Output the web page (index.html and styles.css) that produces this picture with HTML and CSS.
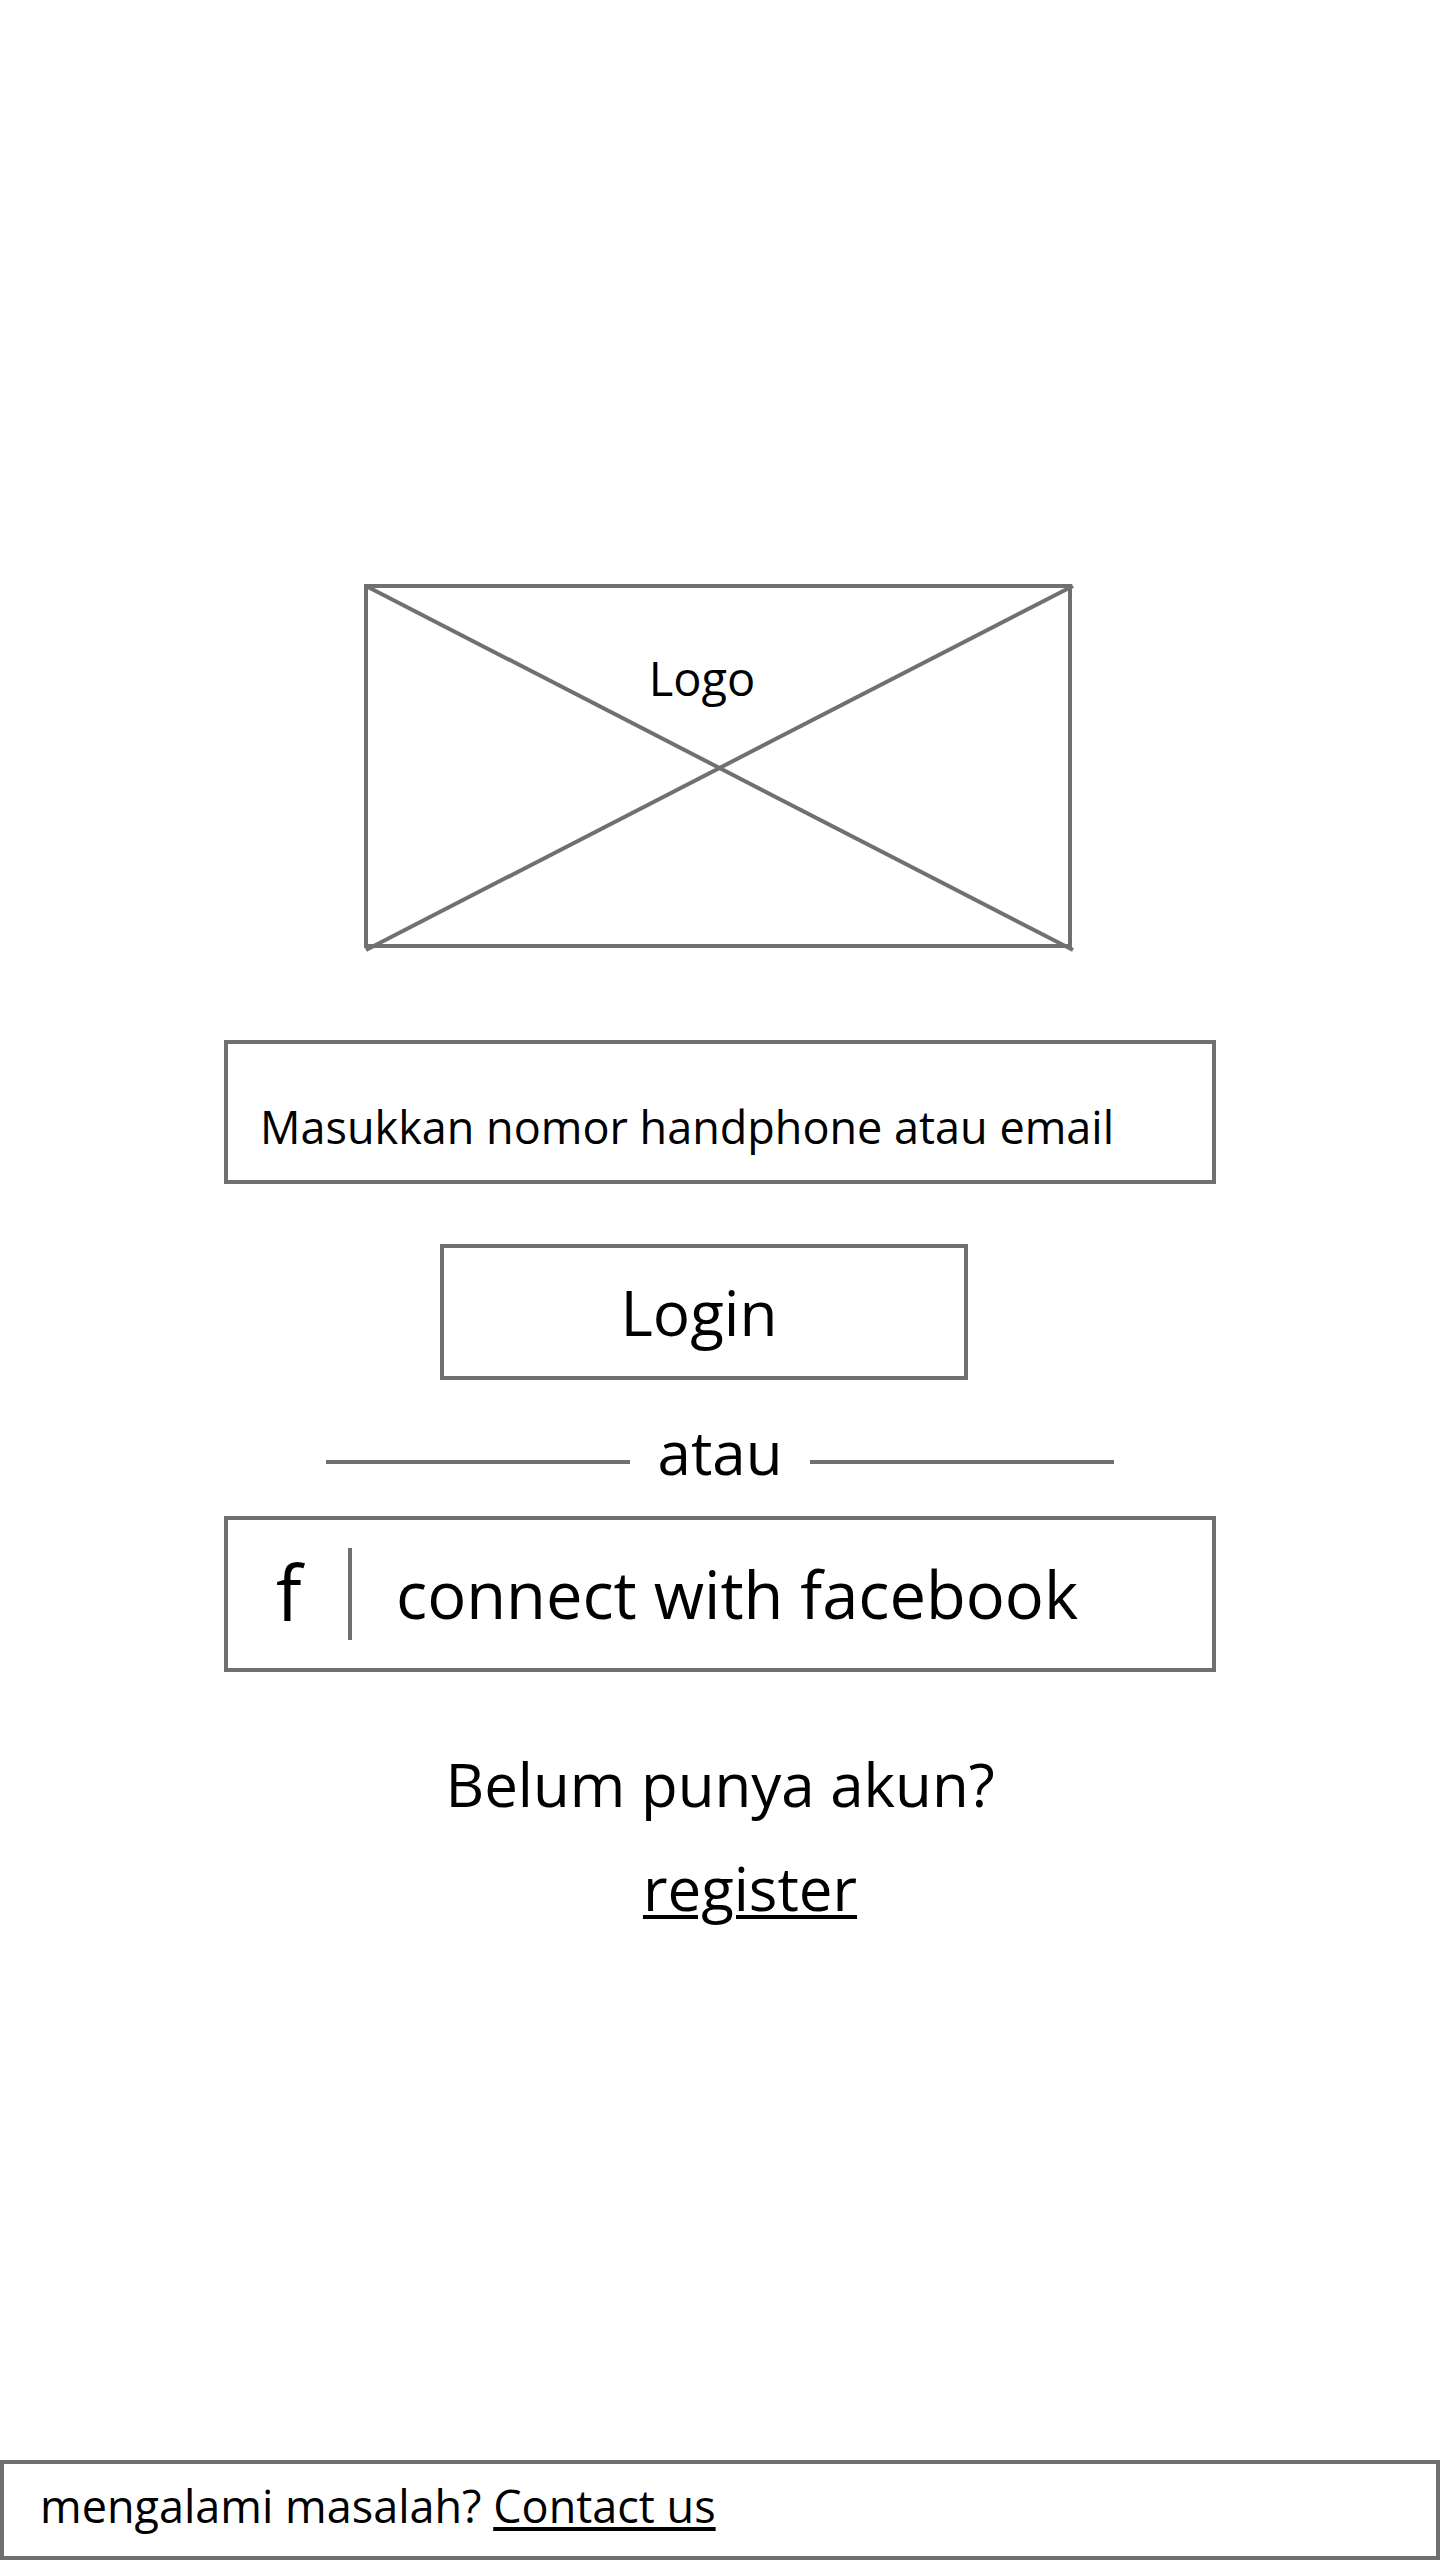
FILE: index.html
```html
<!DOCTYPE html>
<html lang="id">
<head>
<meta charset="utf-8">
<meta name="viewport" content="width=device-width, initial-scale=1">
<title>Login</title>
<link rel="stylesheet" href="styles.css">
</head>
<body>
<main class="page">
  <div class="logo">
    <svg class="logo-cross" viewBox="0 0 708 364" preserveAspectRatio="none" aria-hidden="true">
      <path d="M2 2 L709 366 M2 366 L709 2"/>
    </svg>
    <span class="logo-text">Logo</span>
  </div>
  <form class="form">
    <input class="field" type="text" name="account" placeholder="Masukkan nomor handphone atau email" aria-label="Masukkan nomor handphone atau email">
    <div class="login-row">
      <button class="login" type="submit">Login</button>
    </div>
    <div class="divider"><span class="divider-text">atau</span></div>
    <button class="facebook" type="button">
      <span class="facebook-mark">f</span>
      <span class="facebook-text">connect with facebook</span>
    </button>
  </form>
  <div class="signup">
    <p class="signup-text">Belum punya akun?</p>
    <a class="signup-link" href="#register">register</a>
  </div>
</main>
<footer class="help">mengalami masalah? <a class="help-link" href="#contact">Contact us</a></footer>
</body>
</html>
```
FILE: styles.css
```css
:root {
  --line: #707070;
  --text-md: 45px;
  --text-lg: 60px;
}

* {
  box-sizing: border-box;
}

body {
  display: flex;
  flex-direction: column;
  min-height: 100vh;
  margin: 0;
  background: #fff;
  color: #000;
  font-family: "Open Sans", "Noto Sans", sans-serif;
  font-size: var(--text-md);
}

input,
button {
  border: 4px solid var(--line);
  border-radius: 0;
  background: #fff;
  color: inherit;
  font: inherit;
}

a {
  color: inherit;
  text-decoration-thickness: 4px;
  text-underline-offset: 4px;
}

.page {
  display: flex;
  flex-direction: column;
  align-items: center;
  flex: 1;
  padding: 584px 32px 64px;
}

.logo {
  display: grid;
  width: 100%;
  max-width: 708px;
  height: 364px;
  margin-bottom: 92px;
  margin-right: 4px;
  border: 4px solid var(--line);
}

.logo-cross {
  grid-area: 1 / 1;
  width: calc(100% + 8px);
  height: 364px;
  margin: -4px;
  overflow: visible;
  fill: none;
  stroke: var(--line);
  stroke-width: 4px;
}

.logo-text {
  grid-area: 1 / 1;
  justify-self: center;
  padding: 58px 32px 0 0;
  font-size: 47px;
  line-height: 64px;
}

.form {
  display: flex;
  flex-direction: column;
  width: 100%;
  max-width: 992px;
}

.field {
  width: 100%;
  height: 144px;
  margin-bottom: 60px;
  padding: 28px 32px 0;
}

.field::placeholder {
  color: #000;
  opacity: 1;
}

.login-row {
  display: flex;
  justify-content: center;
  padding-right: 32px;
}

.login {
  width: 528px;
  height: 136px;
  padding: 0 16px 0 6px;
  font-size: 62px;
}

.divider {
  display: flex;
  justify-content: space-between;
  width: 100%;
  max-width: 788px;
  margin: 32px auto 24px;
  font-size: var(--text-lg);
  line-height: 80px;
}

.divider::before,
.divider::after {
  flex: 0 1 304px;
  height: 4px;
  margin-top: 48px;
  background: var(--line);
  content: "";
}

.facebook {
  display: flex;
  align-items: center;
  height: 156px;
  padding: 0 48px;
  font-size: 65px;
  text-align: left;
}

.facebook-mark {
  width: 76px;
  height: 92px;
  margin-right: 44px;
  border-right: 4px solid var(--line);
  font-size: 76px;
  line-height: 88px;
}

.signup {
  display: flex;
  flex-direction: column;
  align-items: center;
  margin-top: 60px;
  font-size: var(--text-lg);
  line-height: 104px;
}

.signup-text {
  margin: 0;
}

.signup-link {
  margin-left: 60px;
}

.help {
  padding: 10px 36px 18px;
  border: 4px solid var(--line);
  line-height: 64px;
}
```
